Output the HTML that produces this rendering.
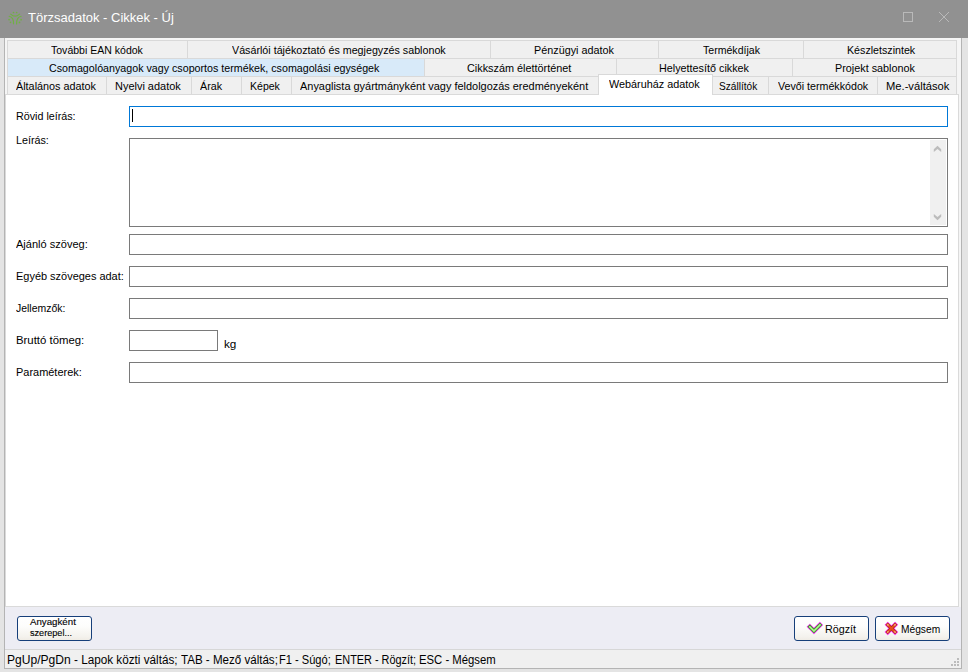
<!DOCTYPE html>
<html lang="hu">
<head>
<meta charset="utf-8">
<title>Törzsadatok - Cikkek - Új</title>
<style>
html,body{margin:0;padding:0;}
body{width:968px;height:672px;overflow:hidden;position:relative;background:#e4e4e4;font-family:"Liberation Sans",sans-serif;font-size:11px;color:#000;}
div,span{box-sizing:border-box;}
.abs{position:absolute;}
.t{position:absolute;white-space:nowrap;line-height:1;z-index:10;transform-origin:0 0;}
#b1a,#b1b{-webkit-text-stroke:0.12px #000;}
#titlebar{position:absolute;left:0;top:0;width:968px;height:38px;background:#919191;}
#client{position:absolute;left:4px;top:38px;width:958px;height:631px;background:#f5f5f5;border-left:1px solid #b4b4b4;border-right:1px solid #b4b4b4;border-bottom:1px solid #b4b4b4;}
.tab{position:absolute;height:19px;background:#f0f0f0;border:1px solid #d9d9d9;}
.tab.hot{background:#d8eaf9;}
.tab.sel{background:#fff;border-bottom:none;height:21px;z-index:3;}
#pane{position:absolute;left:5px;top:94px;width:954px;height:513px;background:#fff;border:1px solid #dadada;}
.inp{position:absolute;left:129px;width:819px;height:21px;background:#fff;border:1px solid #7a7a7a;}
#bottom{position:absolute;left:5px;top:607px;width:956px;height:42px;background:#ededf4;}
#status{position:absolute;left:5px;top:649px;width:956px;height:19px;background:#f0f0f0;border-top:1px solid #d7d7d7;}
.btn{position:absolute;top:616px;height:25px;border:1px solid #163f7a;border-radius:3px;background:linear-gradient(#ffffff 0%,#fdfdfc 40%,#f4f2ed 85%,#efece5 100%);}
</style>
</head>
<body>
<div id="titlebar">
<svg class="abs" style="left:7px;top:10px" width="16" height="16" viewBox="0 0 16 16"><g fill="none" stroke="#70b142" stroke-width="1.15" stroke-linecap="round"><path d="M3.7 4.1 Q8.1 8.3 12.6 4.1"/><path d="M2.1 6.3 Q6.8 7.2 6.5 13.8"/><path d="M14.1 6.3 Q9.4 7.2 9.6 14"/></g><g fill="#70b142"><circle cx="6.5" cy="2.5" r="0.85"/><circle cx="9.6" cy="2.5" r="0.85"/><circle cx="2.1" cy="9.6" r="0.85"/><circle cx="3.5" cy="12.3" r="0.85"/><circle cx="14.1" cy="9.7" r="0.85"/><circle cx="12.5" cy="12.4" r="0.85"/></g></svg>
<div class="abs" style="left:903px;top:12px;width:10px;height:10px;border:1px solid #b9b9b9;"></div>
<svg class="abs" style="left:939px;top:12px" width="10" height="10" viewBox="0 0 10 10"><path d="M0 0 L10 10 M10 0 L0 10" stroke="#b9b9b9" stroke-width="1" fill="none"/></svg>
</div>
<span class="t" id="t_title" style="left:27.71px;top:12.42px;font-size:12.5px;transform:scaleX(1.0392);color:#fff">Törzsadatok - Cikkek - Új</span>
<div id="client"></div>

<!-- row 1 -->
<div class="tab" style="left:7px;top:40px;width:181px"></div>
<div class="tab" style="left:187px;top:40px;width:304px"></div>
<div class="tab" style="left:490px;top:40px;width:169px"></div>
<div class="tab" style="left:658px;top:40px;width:146px"></div>
<div class="tab" style="left:803px;top:40px;width:154px"></div>
<span class="t" id="r1a" style="left:51.08px;top:44.69px;font-size:11px;transform:scaleX(0.9570);color:#000">További EAN kódok</span>
<span class="t" id="r1b" style="left:231.94px;top:44.69px;font-size:11px;transform:scaleX(0.9735);color:#000">Vásárlói tájékoztató és megjegyzés sablonok</span>
<span class="t" id="r1c" style="left:533.83px;top:44.69px;font-size:11px;transform:scaleX(0.9825);color:#000">Pénzügyi adatok</span>
<span class="t" id="r1d" style="left:702.74px;top:44.69px;font-size:11px;transform:scaleX(0.9604);color:#000">Termékdíjak</span>
<span class="t" id="r1e" style="left:846.55px;top:44.69px;font-size:11px;transform:scaleX(0.9695);color:#000">Készletszintek</span>
<!-- row 2 -->
<div class="tab hot" style="left:7px;top:58px;width:418px"></div>
<div class="tab" style="left:424px;top:58px;width:193px"></div>
<div class="tab" style="left:616px;top:58px;width:177px"></div>
<div class="tab" style="left:792px;top:58px;width:165px"></div>
<span class="t" id="r2a" style="left:49.18px;top:62.69px;font-size:11px;transform:scaleX(0.9719);color:#000">Csomagolóanyagok vagy csoportos termékek, csomagolási egységek</span>
<span class="t" id="r2b" style="left:467.35px;top:62.69px;font-size:11px;transform:scaleX(0.9869);color:#000">Cikkszám élettörténet</span>
<span class="t" id="r2c" style="left:659.34px;top:62.69px;font-size:11px;transform:scaleX(0.9814);color:#000">Helyettesítő cikkek</span>
<span class="t" id="r2d" style="left:835.37px;top:62.69px;font-size:11px;transform:scaleX(0.9826);color:#000">Projekt sablonok</span>
<!-- row 3 -->
<div class="tab" style="left:7px;top:76px;width:100px"></div>
<div class="tab" style="left:106px;top:76px;width:86px"></div>
<div class="tab" style="left:191px;top:76px;width:51px"></div>
<div class="tab" style="left:241px;top:76px;width:51px"></div>
<div class="tab" style="left:291px;top:76px;width:308px"></div>
<div class="tab" style="left:712px;top:76px;width:57px"></div>
<div class="tab" style="left:768px;top:76px;width:110px"></div>
<div class="tab" style="left:877px;top:76px;width:80px"></div>
<span class="t" id="r3a" style="left:15.59px;top:80.69px;font-size:11px;transform:scaleX(0.9829);color:#000">Általános adatok</span>
<span class="t" id="r3b" style="left:114.74px;top:80.69px;font-size:11px;transform:scaleX(0.9960);color:#000">Nyelvi adatok</span>
<span class="t" id="r3c" style="left:200.42px;top:80.69px;font-size:11px;transform:scaleX(0.9767);color:#000">Árak</span>
<span class="t" id="r3d" style="left:249.77px;top:80.69px;font-size:11px;transform:scaleX(0.9584);color:#000">Képek</span>
<span class="t" id="r3e" style="left:300.19px;top:80.69px;font-size:11px;transform:scaleX(0.9943);color:#000">Anyaglista gyártmányként vagy feldolgozás eredményeként</span>
<span class="t" id="r3g" style="left:719.03px;top:80.69px;font-size:11px;transform:scaleX(0.9198);color:#000">Szállítók</span>
<span class="t" id="r3h" style="left:777.59px;top:80.69px;font-size:11px;transform:scaleX(0.9704);color:#000">Vevői termékkódok</span>
<span class="t" id="r3i" style="left:885.72px;top:80.69px;font-size:11px;transform:scaleX(1.0167);color:#000">Me.-váltások</span>

<div id="pane"></div>
<div class="tab sel" style="left:598px;top:74px;width:115px"></div>
<span class="t" id="r3f" style="left:608.70px;top:78.69px;font-size:11px;transform:scaleX(0.9841);color:#000">Webáruház adatok</span>

<span class="t" id="l1" style="left:15.58px;top:110.69px;font-size:11px;transform:scaleX(0.9748);color:#000">Rövid leírás:</span>
<div class="inp" style="top:106px;border-color:#0078d7"><div class="abs" style="left:2px;top:2px;width:1px;height:13px;background:#000"></div></div>
<span class="t" id="l2" style="left:15.68px;top:134.69px;font-size:11px;transform:scaleX(0.9764);color:#000">Leírás:</span>
<div class="inp" style="top:138px;height:89px">
  <div class="abs" style="right:1px;top:1px;width:16px;height:85px;background:#f0f0f0"></div>
</div>
<svg class="abs" style="left:930px;top:140px;z-index:5" width="16" height="85" viewBox="0 0 16 85"><g fill="#bcbcbc"><path d="M7.5 5.7 L11.2 9.2 L11.2 12 L7.5 8.9 L3.8 12 L3.8 9.2 Z"/><path d="M7.5 80.3 L11.2 76.8 L11.2 74 L7.5 77.1 L3.8 74 L3.8 76.8 Z"/></g></svg>
<span class="t" id="l3" style="left:16.49px;top:238.69px;font-size:11px;transform:scaleX(1.0026);color:#000">Ajánló szöveg:</span>
<div class="inp" style="top:234px"></div>
<span class="t" id="l4" style="left:16.35px;top:270.69px;font-size:11px;transform:scaleX(0.9959);color:#000">Egyéb szöveges adat:</span>
<div class="inp" style="top:266px"></div>
<span class="t" id="l5" style="left:16.33px;top:302.69px;font-size:11px;transform:scaleX(0.9492);color:#000">Jellemzők:</span>
<div class="inp" style="top:298px"></div>
<span class="t" id="l6" style="left:15.76px;top:334.69px;font-size:11px;transform:scaleX(1.0333);color:#000">Bruttó tömeg:</span>
<div class="inp" style="top:330px;width:89px"></div>
<span class="t" id="kg" style="left:224.07px;top:338.69px;font-size:11px;transform:scaleX(1.0667);color:#000">kg</span>
<span class="t" id="l7" style="left:15.73px;top:366.69px;font-size:11px;transform:scaleX(0.9962);color:#000">Paraméterek:</span>
<div class="inp" style="top:362px"></div>

<div id="bottom"></div>
<div class="abs" style="left:5px;top:606px;width:954px;height:1px;background:#dadada"></div>
<div class="btn" style="left:17px;width:75px;"></div>
<span class="t" id="b1a" style="left:30.38px;top:618.21px;font-size:9.2px;transform:scaleX(1.0556);color:#000">Anyagként</span>
<span class="t" id="b1b" style="left:29.51px;top:629.21px;font-size:9.2px;transform:scaleX(0.9923);color:#000">szerepel...</span>
<div class="btn" style="left:794px;width:75px;"></div>
<svg class="abs" style="left:800px;top:616px;z-index:6" width="30" height="26" viewBox="0 0 30 26"><g fill="none" stroke-linejoin="miter" stroke-linecap="butt"><path d="M8.25 9.25 L13.95 14.95 L21.5 7.4" stroke="#ff22ff" stroke-width="4.5"/><path d="M8.67 9.67 L13.95 14.95 L21.08 7.82" stroke="#2c8c1c" stroke-width="3.3"/><path d="M9.15 10.15 L13.95 14.95 L20.6 8.3" stroke="#8ae96a" stroke-width="2.1"/><path d="M9.5 10.5 L13.95 14.95 L20.25 8.65" stroke="#bdf5a6" stroke-width="0.9"/></g></svg>
<span class="t" id="b2" style="left:825.26px;top:623.69px;font-size:11px;transform:scaleX(0.9764);color:#000">Rögzít</span>
<div class="btn" style="left:875px;width:75px;"></div>
<svg class="abs" style="left:878px;top:614px;z-index:6" width="30" height="30" viewBox="0 0 30 30"><g fill="none" stroke-linecap="butt"><path d="M8.2 9.2 L18.6 19.6 M18.6 9.2 L8.2 19.6" stroke="#ff22ff" stroke-width="4.4"/><path d="M8.62 9.62 L18.18 19.18 M18.18 9.62 L8.62 19.18" stroke="#a8380f" stroke-width="3.2"/><path d="M9.1 10.1 L17.7 18.7 M17.7 10.1 L9.1 18.7" stroke="#ea4e1e" stroke-width="1.9"/><path d="M9.1 10.1 L10.6 11.6 M17.7 10.1 L16.2 11.6 M9.1 18.7 L10.6 17.2 M17.7 18.7 L16.2 17.2" stroke="#f59a72" stroke-width="1.5"/></g></svg>
<span class="t" id="b3" style="left:901.20px;top:623.69px;font-size:11px;transform:scaleX(0.9279);color:#000">Mégsem</span>

<svg class="abs" style="left:951px;top:658px;z-index:6" width="8" height="8" viewBox="0 0 8 8"><g fill="#bcbcbc"><rect x="6" y="0" width="2" height="2"/><rect x="3" y="3" width="2" height="2"/><rect x="6" y="3" width="2" height="2"/><rect x="0" y="6" width="2" height="2"/><rect x="3" y="6" width="2" height="2"/><rect x="6" y="6" width="2" height="2"/></g></svg>
<div id="status"></div>
<span class="t" id="s1" style="left:6.55px;top:653.84px;font-size:12px;transform:scaleX(1.0060);color:#000">PgUp/PgDn</span> <span class="t" id="s2" style="left:73.98px;top:653.84px;font-size:12px;transform:scaleX(0.9766);color:#000">- Lapok közti váltás;</span> <span class="t" id="s3" style="left:181.32px;top:653.84px;font-size:12px;transform:scaleX(0.9640);color:#000">TAB - Mező váltás;</span> <span class="t" id="s4" style="left:279.23px;top:653.84px;font-size:12px;transform:scaleX(0.9240);color:#000">F1 - Súgó;</span> <span class="t" id="s5" style="left:334.70px;top:653.84px;font-size:12px;transform:scaleX(0.9079);color:#000">ENTER - Rögzít;</span> <span class="t" id="s6" style="left:418.87px;top:653.84px;font-size:12px;transform:scaleX(0.9436);color:#000">ESC - Mégsem</span>
</body>
</html>
